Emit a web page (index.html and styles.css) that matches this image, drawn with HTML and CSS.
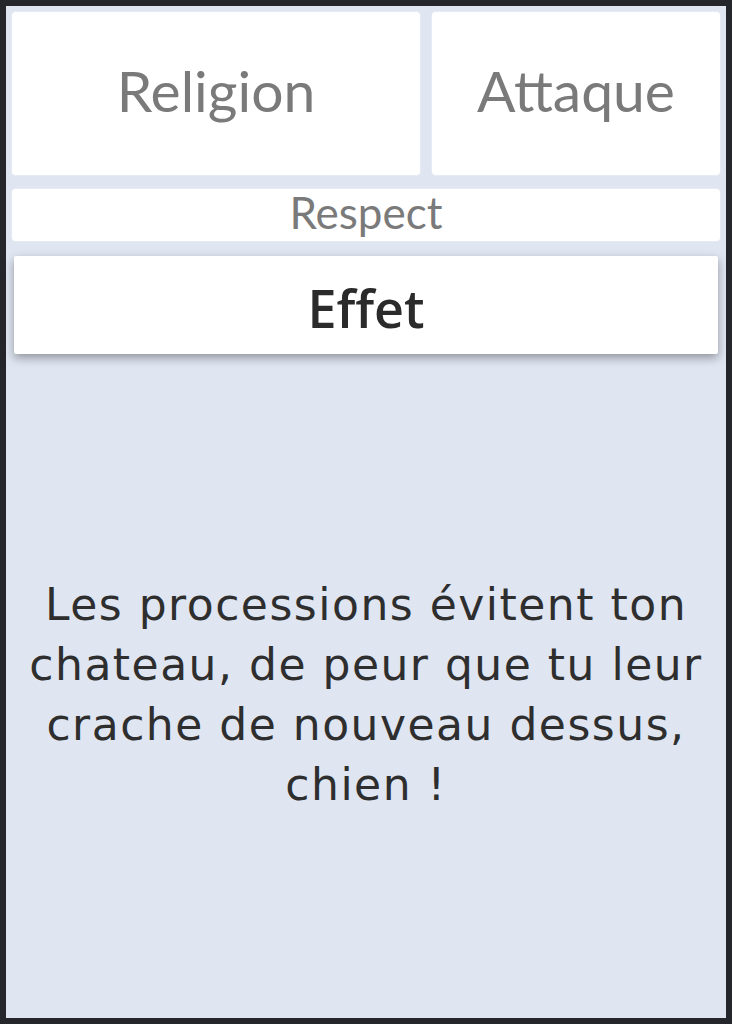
FILE: index.html
```html
<!DOCTYPE html>
<html lang="fr">
<head>
<meta charset="utf-8">
<title>Carte</title>
<link rel="stylesheet" href="styles.css">
</head>
<body>
<div class="frame">
  <div class="stats">
    <div class="card stat">Religion</div>
    <div class="card stat">Attaque</div>
  </div>
  <div class="card respect">Respect</div>
  <div class="card effect">Effet</div>
  <div class="message">
    <p>Les processions évitent ton chateau, de peur que tu leur crache de nouveau dessus, chien !</p>
  </div>
</div>
</body>
</html>
```
FILE: styles.css
```css
html, body {
  margin: 0;
  padding: 0;
}
body {
  background: #24262b;
  width: 732px;
  height: 1024px;
  overflow: hidden;
}
.frame {
  box-sizing: border-box;
  margin: 6px;
  width: 720px;
  height: 1012px;
  background: #dfe5f1;
  padding: 6px;
  display: flex;
  flex-direction: column;
}
.card {
  background: #ffffff;
  border-radius: 4px;
  box-shadow: 0 0 2px rgba(255, 255, 255, 0.8);
}
.stats {
  display: grid;
  grid-template-columns: 17fr 12fr;
  gap: 12px;
  height: 163px;
}
.stat {
  box-sizing: border-box;
  display: flex;
  align-items: center;
  justify-content: center;
  padding-bottom: 8px;
  font-family: Lato, "Liberation Sans", sans-serif;
  font-size: 57px;
  color: #7a7a7a;
}
.respect {
  box-sizing: border-box;
  margin-top: 14px;
  height: 52px;
  padding-bottom: 6px;
  display: flex;
  align-items: center;
  justify-content: center;
  font-family: Lato, "Liberation Sans", sans-serif;
  font-size: 44px;
  color: #7a7a7a;
}
.effect {
  box-sizing: border-box;
  margin: 15px 2px 0;
  height: 98px;
  padding-top: 4px;
  border-radius: 2px;
  display: flex;
  align-items: center;
  justify-content: center;
  font-family: "Open Sans", "Noto Sans", sans-serif;
  font-weight: 600;
  font-size: 52px;
  color: #2b2b2b;
  box-shadow: 0 4px 10px rgba(0, 0, 0, 0.35);
}
.message {
  flex: 1;
  display: flex;
  align-items: center;
  justify-content: center;
  padding: 24px 0 0;
}
.message p {
  margin: 0;
  text-align: center;
  font-family: "DejaVu Sans", "Open Sans", sans-serif;
  font-size: 44px;
  letter-spacing: 1.5px;
  line-height: 60px;
  color: #2e2e2e;
}
```
